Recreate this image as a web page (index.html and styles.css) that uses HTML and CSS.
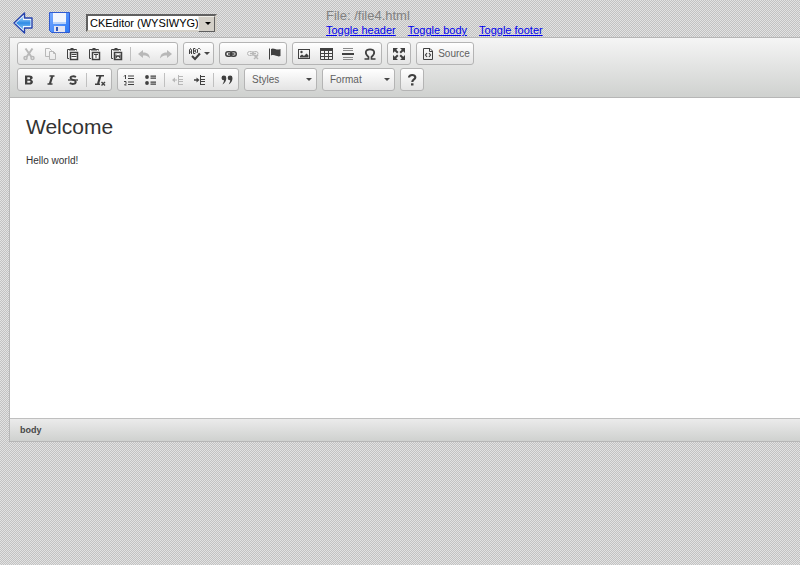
FILE: index.html
```
<!DOCTYPE html>
<html lang="en">
<head>
<meta charset="utf-8">
<title>File: /file4.html</title>
<link rel="stylesheet" href="styles.css">
</head>
<body>
<header class="topbar">
  <div class="file-actions">
    <button class="plain" type="button" aria-label="Back"><svg width="20" height="22" viewBox="0 0 20 22"><defs><linearGradient id="ar" x2="0" y2="1"><stop offset="0" stop-color="#b9e0fb"/><stop offset=".5" stop-color="#2e8be6"/><stop offset="1" stop-color="#93cdf8"/></linearGradient></defs><path d="M1 11 11.500 1V6H19V16H11.500V21Z" fill="#eef7ff" stroke="#2543ad" stroke-width="1.400" stroke-linejoin="round"/><path d="M3 11 10 4.500V8H17.500V14H10V17.500Z" fill="url(#ar)"/></svg></button>
    <button class="plain" type="button" aria-label="Save"><svg width="21" height="21" viewBox="0 0 21 21"><defs><linearGradient id="sv" x2="1" y2="1"><stop offset="0" stop-color="#79aaff"/><stop offset="1" stop-color="#2b78f6"/></linearGradient></defs><path d="M.5.500H20.500V20.500H2.500L.5 18.500Z" fill="url(#sv)" stroke="#315bd0"/><path d="M4 1H17V10H4Z" fill="#f2f5fd"/><path d="M4 10H17V12H4Z" fill="#b8d2fa"/><path d="M5 14H16V20H5Z" fill="#e4e5f2"/><path d="M7 15H9V19H7Z" fill="#2f55b5"/></svg></button>
    <span class="mode-box"><select class="mode" aria-label="Editor"><option>CKEditor (WYSIWYG)</option></select></span>
  </div>
  <div class="file-info">
    <div class="file-name">File: /file4.html</div>
    <nav class="toggles"><a href="#header">Toggle header</a><a href="#body">Toggle body</a><a href="#footer">Toggle footer</a></nav>
  </div>
</header>
<main class="editor">
  <div class="toolbar">
    <div class="row">
      <div class="group">
        <button type="button" class="off" aria-label="Cut"><svg viewBox="0 0 16 16"><path d="M4.500 2.500 10.500 11M11.500 2.500 5.500 11" stroke="currentColor" stroke-width="2" fill="none"/><circle cx="4.500" cy="12" r="1.500" fill="none" stroke="currentColor" stroke-width="1.500"/><circle cx="11.500" cy="12" r="1.500" fill="none" stroke="currentColor" stroke-width="1.500"/></svg></button>
        <button type="button" class="off" aria-label="Copy"><svg viewBox="0 0 16 16"><path d="M6.500 10.500H2.500V2.500H6.500L8.500 4.500V5.500M6.500 5.500H10.500L12.500 7.500V13.500H6.500ZM10.500 5.500V7.500H12.500" stroke="currentColor" fill="none"/></svg></button>
        <button type="button" aria-label="Paste"><svg viewBox="0 0 16 16"><path d="M4 12.500H2.500V3.500H4M10 3.500H11.500V4.500" stroke="currentColor" fill="none"/><path d="M4 3H5.500V2H8.500V3H10V4.500H4Z" fill="currentColor"/><rect x="5.500" y="6.500" width="7" height="7" fill="#fff" stroke="currentColor" stroke-width="1.500"/><path d="M6.500 8.500H11.500M6.500 10.500H11.500" stroke="currentColor"/></svg></button>
        <button type="button" aria-label="Paste as plain text"><svg viewBox="0 0 16 16"><path d="M4 12.500H2.500V3.500H4M10 3.500H11.500V4.500" stroke="currentColor" fill="none"/><path d="M4 3H5.500V2H8.500V3H10V4.500H4Z" fill="currentColor"/><rect x="5.500" y="6.500" width="7" height="7" fill="#fff" stroke="currentColor" stroke-width="1.500"/><path d="M7 8.500H11M9 8.500V12" stroke="currentColor"/></svg></button>
        <button type="button" aria-label="Paste from Word"><svg viewBox="0 0 16 16"><path d="M4 12.500H2.500V3.500H4M10 3.500H11.500V4.500" stroke="currentColor" fill="none"/><path d="M4 3H5.500V2H8.500V3H10V4.500H4Z" fill="currentColor"/><rect x="5.500" y="6.500" width="7" height="7" fill="#fff" stroke="currentColor" stroke-width="1.500"/><path d="M7 8.500V11.500L9 9.500 11 11.500V8.500" fill="none" stroke="currentColor" stroke-width="1.200"/></svg></button>
        <i class="sep"></i>
        <button type="button" class="off" aria-label="Undo"><svg viewBox="0 0 16 16"><path d="M2 8 7 4V6.500C11 6.500 13.500 8 14 12.500 12 10 10 9.500 7 9.500V12Z" fill="currentColor"/></svg></button>
        <button type="button" class="off" aria-label="Redo"><svg viewBox="0 0 16 16"><path d="M14 8 9 4V6.500C5 6.500 2.500 8 2 12.500 4 10 6 9.500 9 9.500V12Z" fill="currentColor"/></svg></button>
      </div>
      <div class="group"><button type="button" class="wide" aria-label="Spell check"><svg viewBox="0 0 16 16"><path d="M2.500 8V4L3.500 2.500 4.500 4V8M2.500 6H4.500M6.500 2.500V7.500H8L9 6.500 8 5 9 3.500 8 2.500ZM6.500 5H8.500M13.500 3.500 12.500 2.500H11.500L10.500 3.500V6.500L11.500 7.500" fill="none" stroke="currentColor"/><path d="M5 10 8 13 13 7.500" stroke="currentColor" stroke-width="2" fill="none"/></svg><span class="caret"></span></button></div>
      <div class="group">
        <button type="button" aria-label="Link"><svg viewBox="0 0 16 16"><rect x="2.750" y="5.750" width="6" height="4.500" rx="2.200" fill="none" stroke="currentColor" stroke-width="1.500"/><rect x="7.750" y="5.750" width="5.500" height="4.500" rx="2.200" fill="none" stroke="currentColor" stroke-width="1.500"/><path d="M5 8H11.500" stroke="currentColor" stroke-width="1.500"/></svg></button>
        <button type="button" class="off" aria-label="Unlink"><svg viewBox="0 0 16 16"><rect x="2.500" y="5.500" width="6" height="4" rx="2" fill="none" stroke="currentColor"/><rect x="7.500" y="5.500" width="5.500" height="4" rx="2" fill="none" stroke="currentColor"/><path d="M5 7.500H11M9 9 13 13M13 9 9 13" stroke="currentColor" stroke-width="1.500"/></svg></button>
        <button type="button" aria-label="Anchor"><svg viewBox="0 0 16 16"><path d="M2.500 2.500V13.500" stroke="currentColor"/><path d="M4 3C7 1 9 5 13.500 3V10C10 11.500 8 8 4 9.500Z" fill="currentColor"/></svg></button>
      </div>
      <div class="group">
        <button type="button" aria-label="Image"><svg viewBox="0 0 16 16"><rect x="2.500" y="3.500" width="11" height="9" fill="none" stroke="currentColor"/><path d="M4 11.500V10L6 8.500 8 10 10.500 7.500 12.500 9.500V11.500Z" fill="currentColor"/><circle cx="5.500" cy="6" r="1.200" fill="currentColor"/></svg></button>
        <button type="button" aria-label="Table"><svg viewBox="0 0 16 16"><path d="M2 2H15V5H2Z" fill="currentColor"/><path d="M2.500 4V13.500H14.500V4M6.500 4V13M10.500 4V13M2 7.500H15M2 10.500H15" stroke="currentColor" fill="none"/></svg></button>
        <button type="button" aria-label="Horizontal line"><svg viewBox="0 0 16 16"><path d="M3 2.500H13M3 4.500H13M3 11.500H13M3 13.500H13" stroke="#888"/><path d="M2 8H14" stroke="currentColor" stroke-width="2"/></svg></button>
        <button type="button" aria-label="Special character"><svg viewBox="0 0 16 16"><path d="M2.500 13H6.500V11C2 7 3.500 3.300 8 3.300S14 7 9.500 11V13H13.500" fill="none" stroke="currentColor" stroke-width="1.700"/></svg></button>
      </div>
      <div class="group"><button type="button" aria-label="Maximize"><svg viewBox="0 0 16 16"><path d="M2 2H7L2 7ZM14 2V7L9 2ZM2 14V9L7 14ZM14 14H9L14 9Z" fill="currentColor"/><path d="M4 4 6.800 6.800M12 4 9.200 6.800M4 12 6.800 9.200M12 12 9.200 9.200" stroke="currentColor" stroke-width="2"/></svg></button></div>
      <div class="group"><button type="button" class="source"><svg viewBox="0 0 16 16"><path d="M3.500 2.500H10L12.500 5V13.500H3.500ZM9.500 3V5.500H12" fill="none" stroke="currentColor"/><path d="M7 7 5.500 9 7 11M9 7 10.500 9 9 11" fill="none" stroke="currentColor" stroke-width="1.200"/></svg>Source</button></div>
    </div>
    <div class="row">
      <div class="group">
        <button type="button" aria-label="Bold"><svg viewBox="0 0 16 16"><path fill-rule="evenodd" d="M4 3.500H8.500C12.500 3.500 12.500 7 10 7.700 13 8.500 12.500 12.500 8.500 12.500H4ZM6.300 5.200V7.200H8C9.500 7.200 9.500 5.200 8 5.200ZM6.300 8.700V10.800H8.200C10 10.800 10 8.700 8.200 8.700Z" fill="currentColor"/></svg></button>
        <button type="button" aria-label="Italic"><svg viewBox="0 0 16 16"><path d="M6.500 4H11.500M4.500 12H9.500" stroke="currentColor" stroke-width="1.300"/><path d="M9.300 4 6.800 12" stroke="currentColor" stroke-width="2.200"/></svg></button>
        <button type="button" aria-label="Strikethrough"><svg viewBox="0 0 16 16"><path d="M11 5C9 3.900 5.500 4 5.500 6 5.500 8.300 10.700 7.500 10.700 10 10.700 12.300 7 12.300 4.700 11.200" fill="none" stroke="currentColor" stroke-width="1.900"/><path d="M3 8H13" stroke="currentColor" stroke-width="1.300"/></svg></button>
        <i class="sep"></i>
        <button type="button" aria-label="Remove format"><svg viewBox="0 0 16 16"><path d="M4 3.700H12M3 12.300H8" stroke="currentColor" stroke-width="1.500"/><path d="M8.500 3.500 6 12" stroke="currentColor" stroke-width="2.200"/><path d="M9.500 10 13 13.500M13 10 9.500 13.500" stroke="currentColor" stroke-width="1.400"/></svg></button>
      </div>
      <div class="group">
        <button type="button" aria-label="Numbered list"><svg viewBox="0 0 16 16"><path d="M3 4.500 4.500 3V7M3 9.500H5V11.500L3.500 13H5.500" fill="none" stroke="currentColor"/><path d="M7 4H13M7 6.500H13M7 10H13M7 12.500H13" stroke="currentColor" stroke-width="1.200"/></svg></button>
        <button type="button" aria-label="Bulleted list"><svg viewBox="0 0 16 16"><circle cx="4" cy="5" r="1.900" fill="currentColor"/><circle cx="4" cy="11" r="1.900" fill="currentColor"/><path d="M7.500 4.200H13M7.500 6.200H13M7.500 10.200H13M7.500 12.200H13" stroke="currentColor" stroke-width="1.200"/></svg></button>
        <i class="sep"></i>
        <button type="button" class="off" aria-label="Decrease indent"><svg viewBox="0 0 16 16"><path d="M8.500 3V13M9 4.500H13M9 7.500H13M9 9.500H13M9 12.500H13" stroke="currentColor"/><path d="M2 8 5 5.500V10.500Z" fill="currentColor"/><path d="M4 8H7" stroke="currentColor"/></svg></button>
        <button type="button" aria-label="Increase indent"><svg viewBox="0 0 16 16"><path d="M8.500 3V13M9 4.500H13M9 7.500H13M9 9.500H13M9 12.500H13" stroke="currentColor"/><path d="M7.500 8 4.500 5.500V10.500Z" fill="currentColor"/><path d="M2 8H5" stroke="currentColor" stroke-width="1.500"/></svg></button>
        <i class="sep"></i>
        <button type="button" aria-label="Block quote"><svg viewBox="0 0 16 16"><path d="M2.500 6A2.400 2.400 0 0 1 7.300 6C7.300 9 6 11 3.500 12.500 4.500 10.500 5 9.500 5 8.300A2.400 2.400 0 0 1 2.500 6ZM8.700 6A2.400 2.400 0 0 1 13.500 6C13.500 9 12.200 11 9.700 12.500 10.700 10.500 11.200 9.500 11.200 8.300A2.400 2.400 0 0 1 8.700 6Z" fill="currentColor"/></svg></button>
      </div>
      <div class="group"><button type="button" class="combo">Styles<span class="caret"></span></button></div>
      <div class="group"><button type="button" class="combo">Format<span class="caret"></span></button></div>
      <div class="group"><button type="button" aria-label="About"><svg viewBox="0 0 16 16"><path d="M5 5.500C5 2 11.500 2.300 11.300 5.500 11.200 7.500 8.300 7.300 8.300 10" fill="none" stroke="currentColor" stroke-width="2.200"/><path d="M7 11.300H9.500V13.500H7Z" fill="currentColor"/></svg></button></div>
    </div>
  </div>
  <article class="content" contenteditable="true">
    <h1>Welcome</h1>
    <p>Hello world!</p>
  </article>
  <footer class="path"><a href="#body">body</a></footer>
</main>
</body>
</html>
```

FILE: styles.css
```
* { box-sizing: border-box; }
body {
  margin: 0;
  overflow: hidden;
  padding-left: 9px;
  font-family: "Liberation Sans", Arial, sans-serif;
  background: repeating-conic-gradient(#c2c2c2 0 25%, #e2e2e2 0 50%) 0 0 / 2px 2px;
}
button { font: inherit; border: 0; padding: 0; background: none; color: #404040; }
.topbar { display: flex; height: 37px; }
.file-actions { display: flex; flex: 0 0 317px; align-items: center; gap: 16px; padding: 8px 0 0 4px; }
.plain { display: flex; }
.mode-box { position: relative; display: flex; }
.mode {
  appearance: none;
  width: 131px;
  height: 18px;
  margin: 0;
  padding: 0 2px;
  border: 2px solid;
  border-color: #606060 #d4d0c8 #d4d0c8 #606060;
  border-radius: 0;
  color: #000;
  font: 11px/14px "Liberation Sans", Arial, sans-serif;
  background: #fff;
}
.mode-box::before {
  content: "";
  position: absolute;
  top: 2px;
  right: 2px;
  width: 15px;
  height: 14px;
  border: 1px solid;
  border-color: #f0eee8 #606060 #606060 #f0eee8;
  background: #d4d0c8;
  pointer-events: none;
}
.mode-box::after {
  content: "";
  position: absolute;
  top: 8px;
  right: 6px;
  border: 3px solid transparent;
  border-top-color: #000;
  border-bottom: 0;
  pointer-events: none;
}
.file-info { padding-top: 9px; }
.file-name { color: #808080; font-size: 13px; line-height: 14px; }
.toggles { display: flex; gap: 12px; font-size: 11px; line-height: 14px; }
.toggles a { color: #00e; }
.editor { border: 1px solid #b6b6b6; border-right: 0; background: #fff; }
.toolbar { padding: 4px 7px 3px; border-bottom: 1px solid #b6b6b6; background: linear-gradient(#f5f5f5, #cfd1cf); }
.row { display: flex; gap: 5px; padding-bottom: 3px; }
.group {
  display: flex;
  align-items: center;
  height: 23px;
  border: 1px solid #b4b4b4;
  border-radius: 3px;
  background: linear-gradient(#fff, #e4e4e4);
}
.group button { display: flex; align-items: center; justify-content: center; width: 22px; height: 21px; }
.group svg { flex: none; width: 16px; height: 16px; }
.group .off { color: #b8b8b8; }
.group .wide { width: 29px; gap: 1px; }
.group .source { width: 56px; gap: 2px; color: #606060; font-size: 10px; }
.source svg { color: #404040; }
.group .combo { width: 71px; justify-content: space-between; padding: 0 4px 0 7px; color: #606060; font-size: 10px; }
.caret { border: 3px solid transparent; border-top-color: #474747; border-bottom: 0; }
.sep { width: 1px; height: 14px; margin: 0 2px; background: #c0c0c0; }
.content { height: 320px; padding: 16px; color: #333; outline: 0; }
.content h1 { margin: 0 0 13px; font-size: 21px; line-height: 26px; font-weight: 400; }
.content p { margin: 0; font-size: 10px; line-height: 16px; }
.path { padding: 4px 10px; border-top: 1px solid #bfbfbf; background: linear-gradient(#ebebeb, #cfd1cf); font-size: 9px; line-height: 14px; }
.path a { color: #484848; font-weight: 700; text-decoration: none; }
```
